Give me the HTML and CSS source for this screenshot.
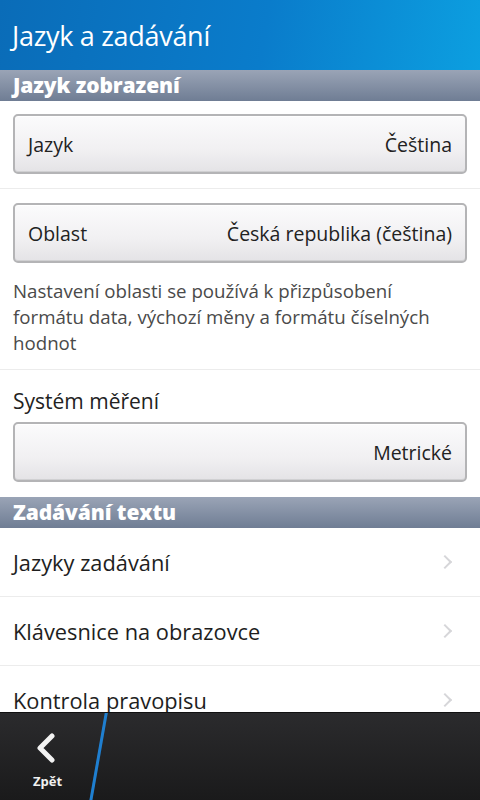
FILE: index.html
```html
<!DOCTYPE html>
<html lang="cs">
<head>
<meta charset="UTF-8">
<meta name="viewport" content="width=device-width, initial-scale=1.0">
<title>Jazyk a zadávání</title>
<link rel="stylesheet" href="styles.css">
</head>
<body>
<div class="screen">
  <header class="titlebar">
    <h1>Jazyk a zadávání</h1>
  </header>

  <div class="content">
    <h2 class="section">Jazyk zobrazení</h2>

    <div class="row">
      <div class="dropdown">
        <span>Jazyk</span>
        <span>Čeština</span>
      </div>
    </div>

    <div class="row row-top">
      <div class="dropdown">
        <span>Oblast</span>
        <span>Česká republika (čeština)</span>
      </div>
      <p class="hint">Nastavení oblasti se používá k přizpůsobení formátu data, výchozí měny a formátu číselných hodnot</p>
    </div>

    <div class="row row-label">
      <div class="label">Systém měření</div>
      <div class="dropdown">
        <span></span>
        <span>Metrické</span>
      </div>
    </div>

    <h2 class="section">Zadávání textu</h2>

    <ul class="list">
      <li>Jazyky zadávání <span class="chev"></span></li>
      <li>Klávesnice na obrazovce <span class="chev"></span></li>
      <li>Kontrola pravopisu <span class="chev"></span></li>
    </ul>
  </div>

  <footer class="actionbar">
    <div class="back">
      <svg width="22" height="30" viewBox="0 0 22 30">
        <path d="M17 3 L5 15 L17 27" fill="none" stroke="#f2f2f2" stroke-width="5" stroke-linecap="round" stroke-linejoin="round"/>
      </svg>
      <span>Zpět</span>
    </div>
    <div class="divider"></div>
  </footer>
</div>
</body>
</html>
```

FILE: styles.css
```css
body {
  margin: 0;
  font-family: "Open Sans", "Liberation Sans", sans-serif;
  background: #fff;
}

.screen {
  width: 480px;
  height: 800px;
  position: relative;
  overflow: hidden;
  display: flex;
  flex-direction: column;
}

.titlebar {
  height: 70px;
  flex: none;
  background: linear-gradient(100deg, #0a6cb8 0%, #0a7ccb 55%, #0c9fe0 100%);
  display: flex;
  align-items: center;
}

.titlebar h1 {
  margin: 0 0 0 12px;
  font-size: 27px;
  font-weight: 400;
  color: #fff;
  letter-spacing: -0.3px;
}

.content {
  flex: 1;
  overflow: hidden;
}

.section {
  margin: 0;
  height: 31px;
  line-height: 31px;
  padding-left: 13px;
  background: linear-gradient(#9aa4b6, #6f7d94);
  color: #fff;
  font-size: 21px;
  font-weight: 800;
  letter-spacing: -0.1px;
}

.row {
  padding: 13px 13px 14px 13px;
  border-bottom: 1px solid #ececec;
}

.row-top {
  padding-top: 14px;
  padding-bottom: 13px;
}

.row-label {
  padding-top: 14px;
  padding-bottom: 15px;
  border-bottom: none;
}

.dropdown {
  height: 56px;
  border: 2px solid #b4b4b6;
  border-radius: 5px;
  background: linear-gradient(#fbfbfc 0%, #f1f0f2 60%, #e4e3e6 100%);
  box-shadow: inset 0 1px 0 #fff, inset 0 -1px 0 #d0d0d2;
  display: flex;
  justify-content: space-between;
  align-items: center;
  padding: 0 13px;
  font-size: 19.5px;
  color: #222;
}

.hint {
  margin: 15px 0 0 0;
  padding-right: 20px;
  font-size: 18.7px;
  line-height: 26px;
  color: #4a4a4a;
}

.label {
  font-size: 21px;
  color: #222;
  margin: 3px 0 7px 0;
}

.list {
  list-style: none;
  margin: 0;
  padding: 0;
}

.list li {
  height: 68px;
  border-bottom: 1px solid #ececec;
  display: flex;
  align-items: center;
  justify-content: space-between;
  padding: 0 30px 0 13px;
  font-size: 21.8px;
  color: #1e1e1e;
}

.chev {
  width: 8px;
  height: 8px;
  border-top: 2px solid #d6d6d9;
  border-right: 2px solid #d6d6d9;
  transform: rotate(45deg);
}

.actionbar {
  position: absolute;
  left: 0;
  bottom: 0;
  width: 480px;
  height: 87px;
  overflow: hidden;
  background: linear-gradient(#2b2b2d, #1a1a1b);
  border-top: 1px solid #111;
}

.back {
  width: 95px;
  display: flex;
  flex-direction: column;
  align-items: center;
  padding-top: 20px;
}

.back svg {
  margin-left: -3px;
}

.back span {
  margin-top: 9px;
  font-size: 13px;
  font-weight: 700;
  color: #f0f0f0;
}

.divider {
  position: absolute;
  left: 97px;
  top: -4px;
  width: 3px;
  height: 96px;
  background: #1f7fd0;
  transform: rotate(10deg);
}
```
